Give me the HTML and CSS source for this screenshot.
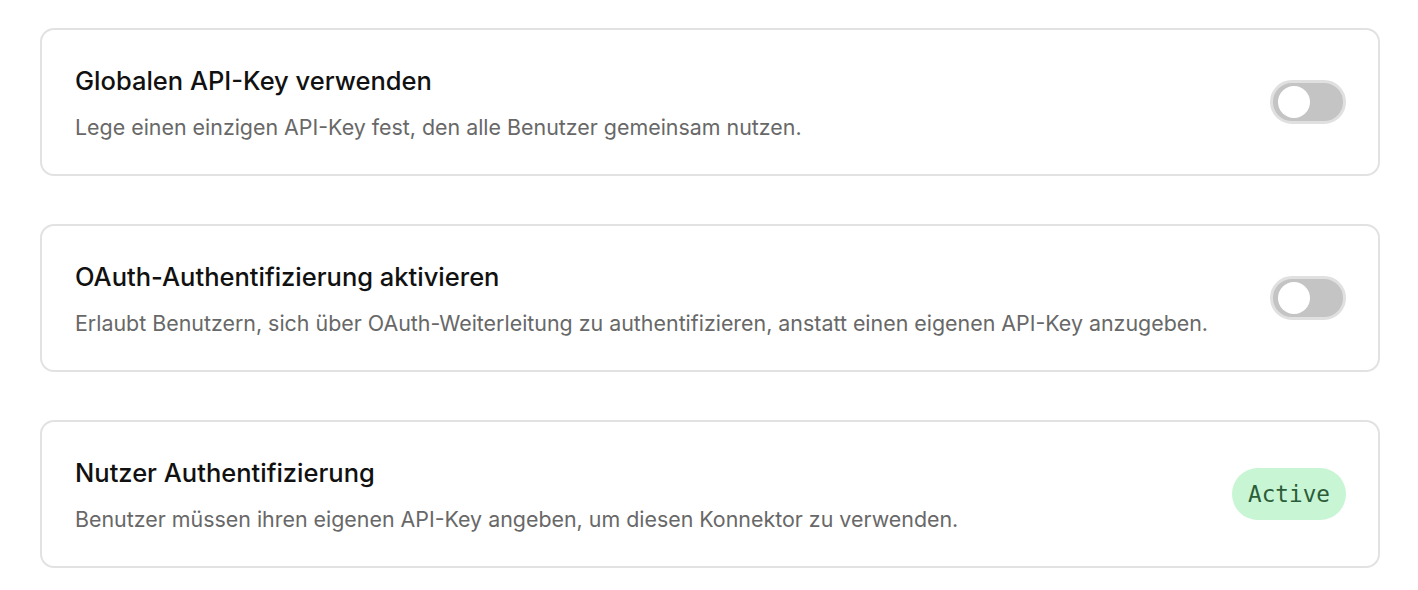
FILE: index.html
```html
<!DOCTYPE html>
<html lang="de">
<head>
<meta charset="utf-8">
<link rel="stylesheet" href="styles.css">
</head>
<body>
<main class="list">
  <section class="card">
    <div class="text">
      <h2 class="title">Globalen API-Key verwenden</h2>
      <p class="desc">Lege einen einzigen API-Key fest, den alle Benutzer gemeinsam nutzen.</p>
    </div>
    <div class="toggle" role="switch" aria-checked="false"><span class="knob"></span></div>
  </section>
  <section class="card">
    <div class="text">
      <h2 class="title">OAuth-Authentifizierung aktivieren</h2>
      <p class="desc">Erlaubt Benutzern, sich über OAuth-Weiterleitung zu authentifizieren, anstatt einen eigenen API-Key anzugeben.</p>
    </div>
    <div class="toggle" role="switch" aria-checked="false"><span class="knob"></span></div>
  </section>
  <section class="card">
    <div class="text">
      <h2 class="title">Nutzer Authentifizierung</h2>
      <p class="desc">Benutzer müssen ihren eigenen API-Key angeben, um diesen Konnektor zu verwenden.</p>
    </div>
    <span class="badge">Active</span>
  </section>
</main>
</body>
</html>
```
FILE: styles.css
```css
html, body {
  margin: 0;
  background: #ffffff;
}
body {
  font-family: "Inter", "Noto Sans", sans-serif;
  padding: 28px 38px 28px 40px;
}
.list {
  display: flex;
  flex-direction: column;
  gap: 48px;
}
.card {
  box-sizing: border-box;
  height: 148px;
  border: 2px solid #e2e2e2;
  border-radius: 14px;
  padding: 2px 32px 0 33px;
  display: flex;
  align-items: center;
  justify-content: space-between;
}
.text {
  display: flex;
  flex-direction: column;
  gap: 16px;
}
.title {
  margin: 0;
  font-size: 25.5px;
  line-height: 32px;
  font-weight: 500;
  color: #111111;
}
.desc {
  margin: 0;
  font-size: 21.4px;
  line-height: 28px;
  font-weight: 400;
  color: #686868;
}
.toggle {
  box-sizing: border-box;
  width: 76px;
  height: 44px;
  margin-top: -2px;
  border: 3px solid #e0e0e0;
  border-radius: 22px;
  background: #c4c4c4;
  display: flex;
  align-items: center;
  padding-left: 5px;
  flex-shrink: 0;
}
.knob {
  width: 32px;
  height: 32px;
  border-radius: 50%;
  background: #ffffff;
}
.badge {
  box-sizing: border-box;
  height: 52px;
  margin-top: -2px;
  padding: 0 16px;
  border-radius: 26px;
  background: #c8f5d4;
  color: #2b5d38;
  font-family: "DejaVu Sans Mono", monospace;
  font-size: 22.7px;
  line-height: 52px;
  flex-shrink: 0;
}
```
